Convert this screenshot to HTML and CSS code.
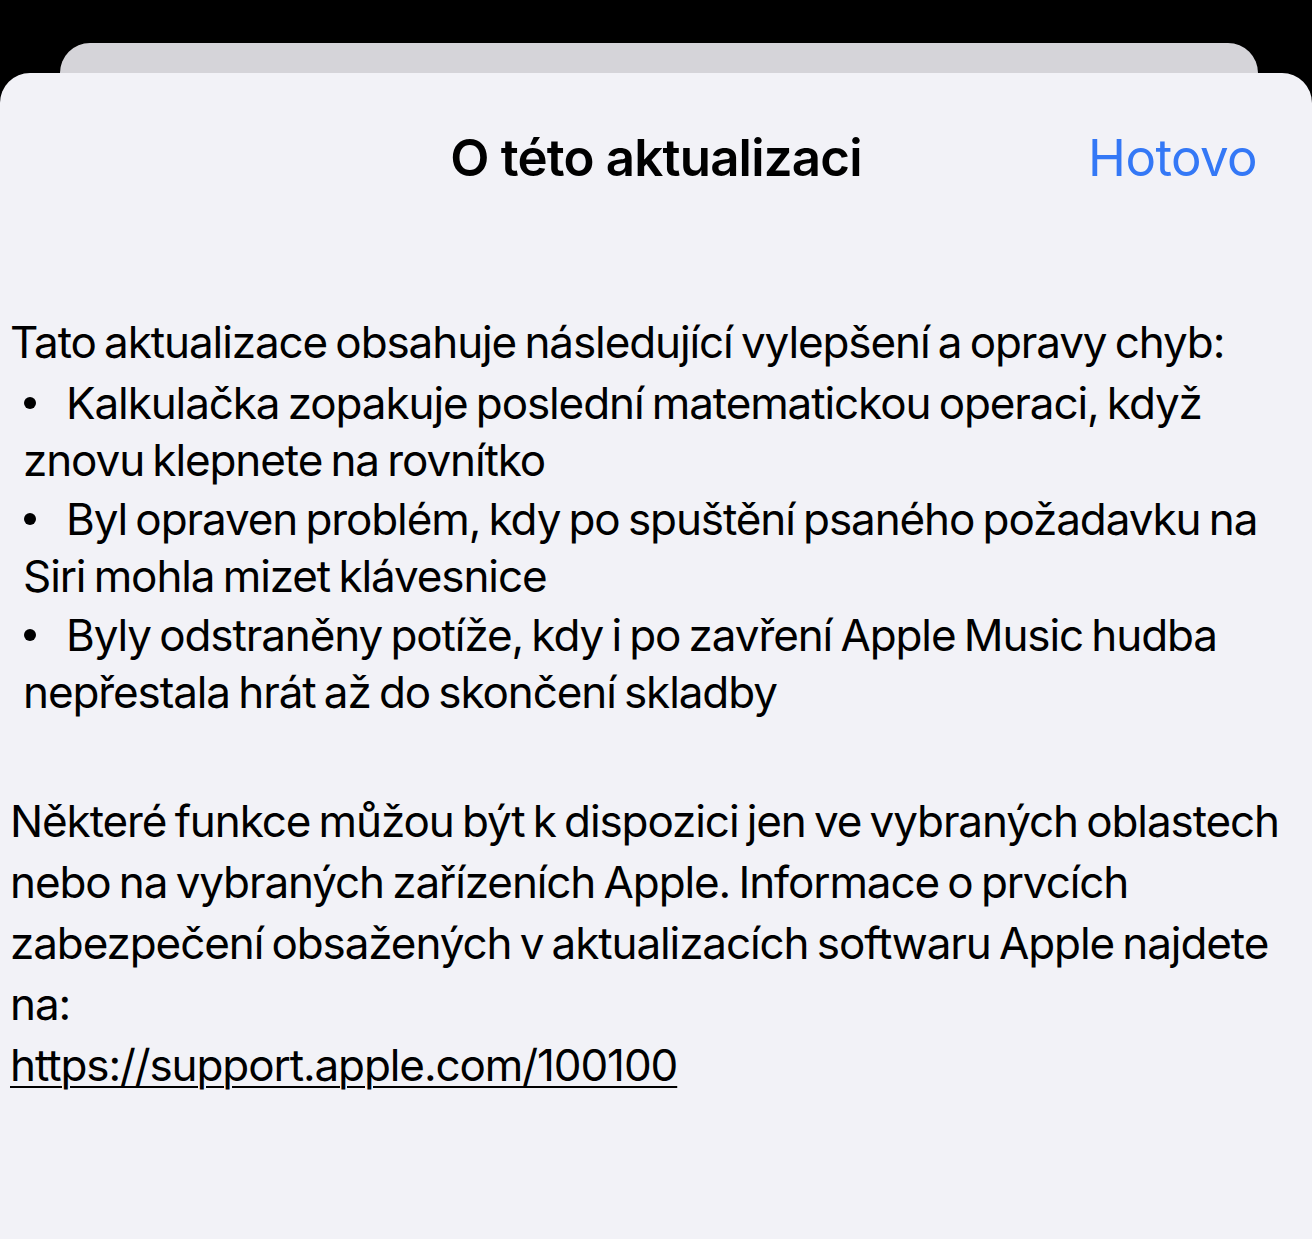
FILE: index.html
```html
<!DOCTYPE html>
<html lang="cs">
<head>
<meta charset="utf-8">
<title>O této aktualizaci</title>
<link rel="stylesheet" href="styles.css">
</head>
<body>
<div class="back-card"></div>
<main class="sheet">
  <header class="nav">
    <div class="nav-side"></div>
    <h1 class="nav-title">O této aktualizaci</h1>
    <div class="nav-side nav-right"><span class="done">Hotovo</span></div>
  </header>
  <section class="notes">
    <p class="intro">Tato aktualizace obsahuje následující vylepšení a opravy chyb:</p>
    <ul class="list">
      <li class="item"><span class="dot"></span>Kalkulačka zopakuje poslední matematickou operaci, když znovu klepnete na rovnítko</li>
      <li class="item"><span class="dot"></span>Byl opraven problém, kdy po spuštění psaného požadavku na Siri mohla mizet klávesnice</li>
      <li class="item"><span class="dot"></span>Byly odstraněny potíže, kdy i po zavření Apple Music hudba nepřestala hrát až do skončení skladby</li>
    </ul>
    <p class="outro">Některé funkce můžou být k dispozici jen ve vybraných oblastech nebo na vybraných zařízeních Apple. Informace o prvcích zabezpečení obsažených v aktualizacích softwaru Apple najdete na:<br><a class="link" href="#">https://support.apple.com/100100</a></p>
  </section>
</main>
</body>
</html>
```

FILE: styles.css
```css
html, body {
  margin: 0;
  padding: 0;
}
body {
  background: #000;
  height: 1239px;
  overflow: hidden;
  font-family: Inter, "Noto Sans", "Liberation Sans", sans-serif;
  color: #000;
}
.back-card {
  margin: 43px 54px 0 60px;
  height: 30px;
  background: #d5d4d9;
  border-radius: 30px 30px 0 0;
}
.sheet {
  background: #f2f2f7;
  border-radius: 30px 30px 0 0;
  height: 1166px;
}
.nav {
  display: grid;
  grid-template-columns: 1fr auto 1fr;
  align-items: center;
  padding-top: 55px;
  height: 60px;
}
.nav-title {
  margin: 0;
  font-size: 51px;
  font-weight: 600;
  line-height: 60px;
  letter-spacing: -0.8px;
}
.nav-right {
  display: flex;
  justify-content: flex-end;
  padding-right: 55px;
}
.done {
  color: #3478f6;
  font-size: 51px;
  font-weight: 400;
  line-height: 60px;
  letter-spacing: -0.6px;
}
.notes {
  padding: 125px 10px 0 10px;
  font-size: 44px;
  letter-spacing: -1.1px;
  word-spacing: -3px;
}
.intro {
  margin: 0;
  line-height: 58px;
}
.list {
  list-style: none;
  margin: 4px 0 0 0;
  padding: 0 0 0 13px;
  line-height: 57px;
}
.item {
  margin: 0 0 2px 0;
}
.dot {
  display: inline-block;
  width: 12px;
  height: 12px;
  border-radius: 50%;
  background: #000;
  margin: 0 30px 10px 1px;
}
.outro {
  margin: 70px 0 0 0;
  line-height: 61px;
}
.link {
  color: #000;
  text-decoration: underline;
  text-decoration-thickness: 2px;
  text-underline-offset: 5px;
}
```
